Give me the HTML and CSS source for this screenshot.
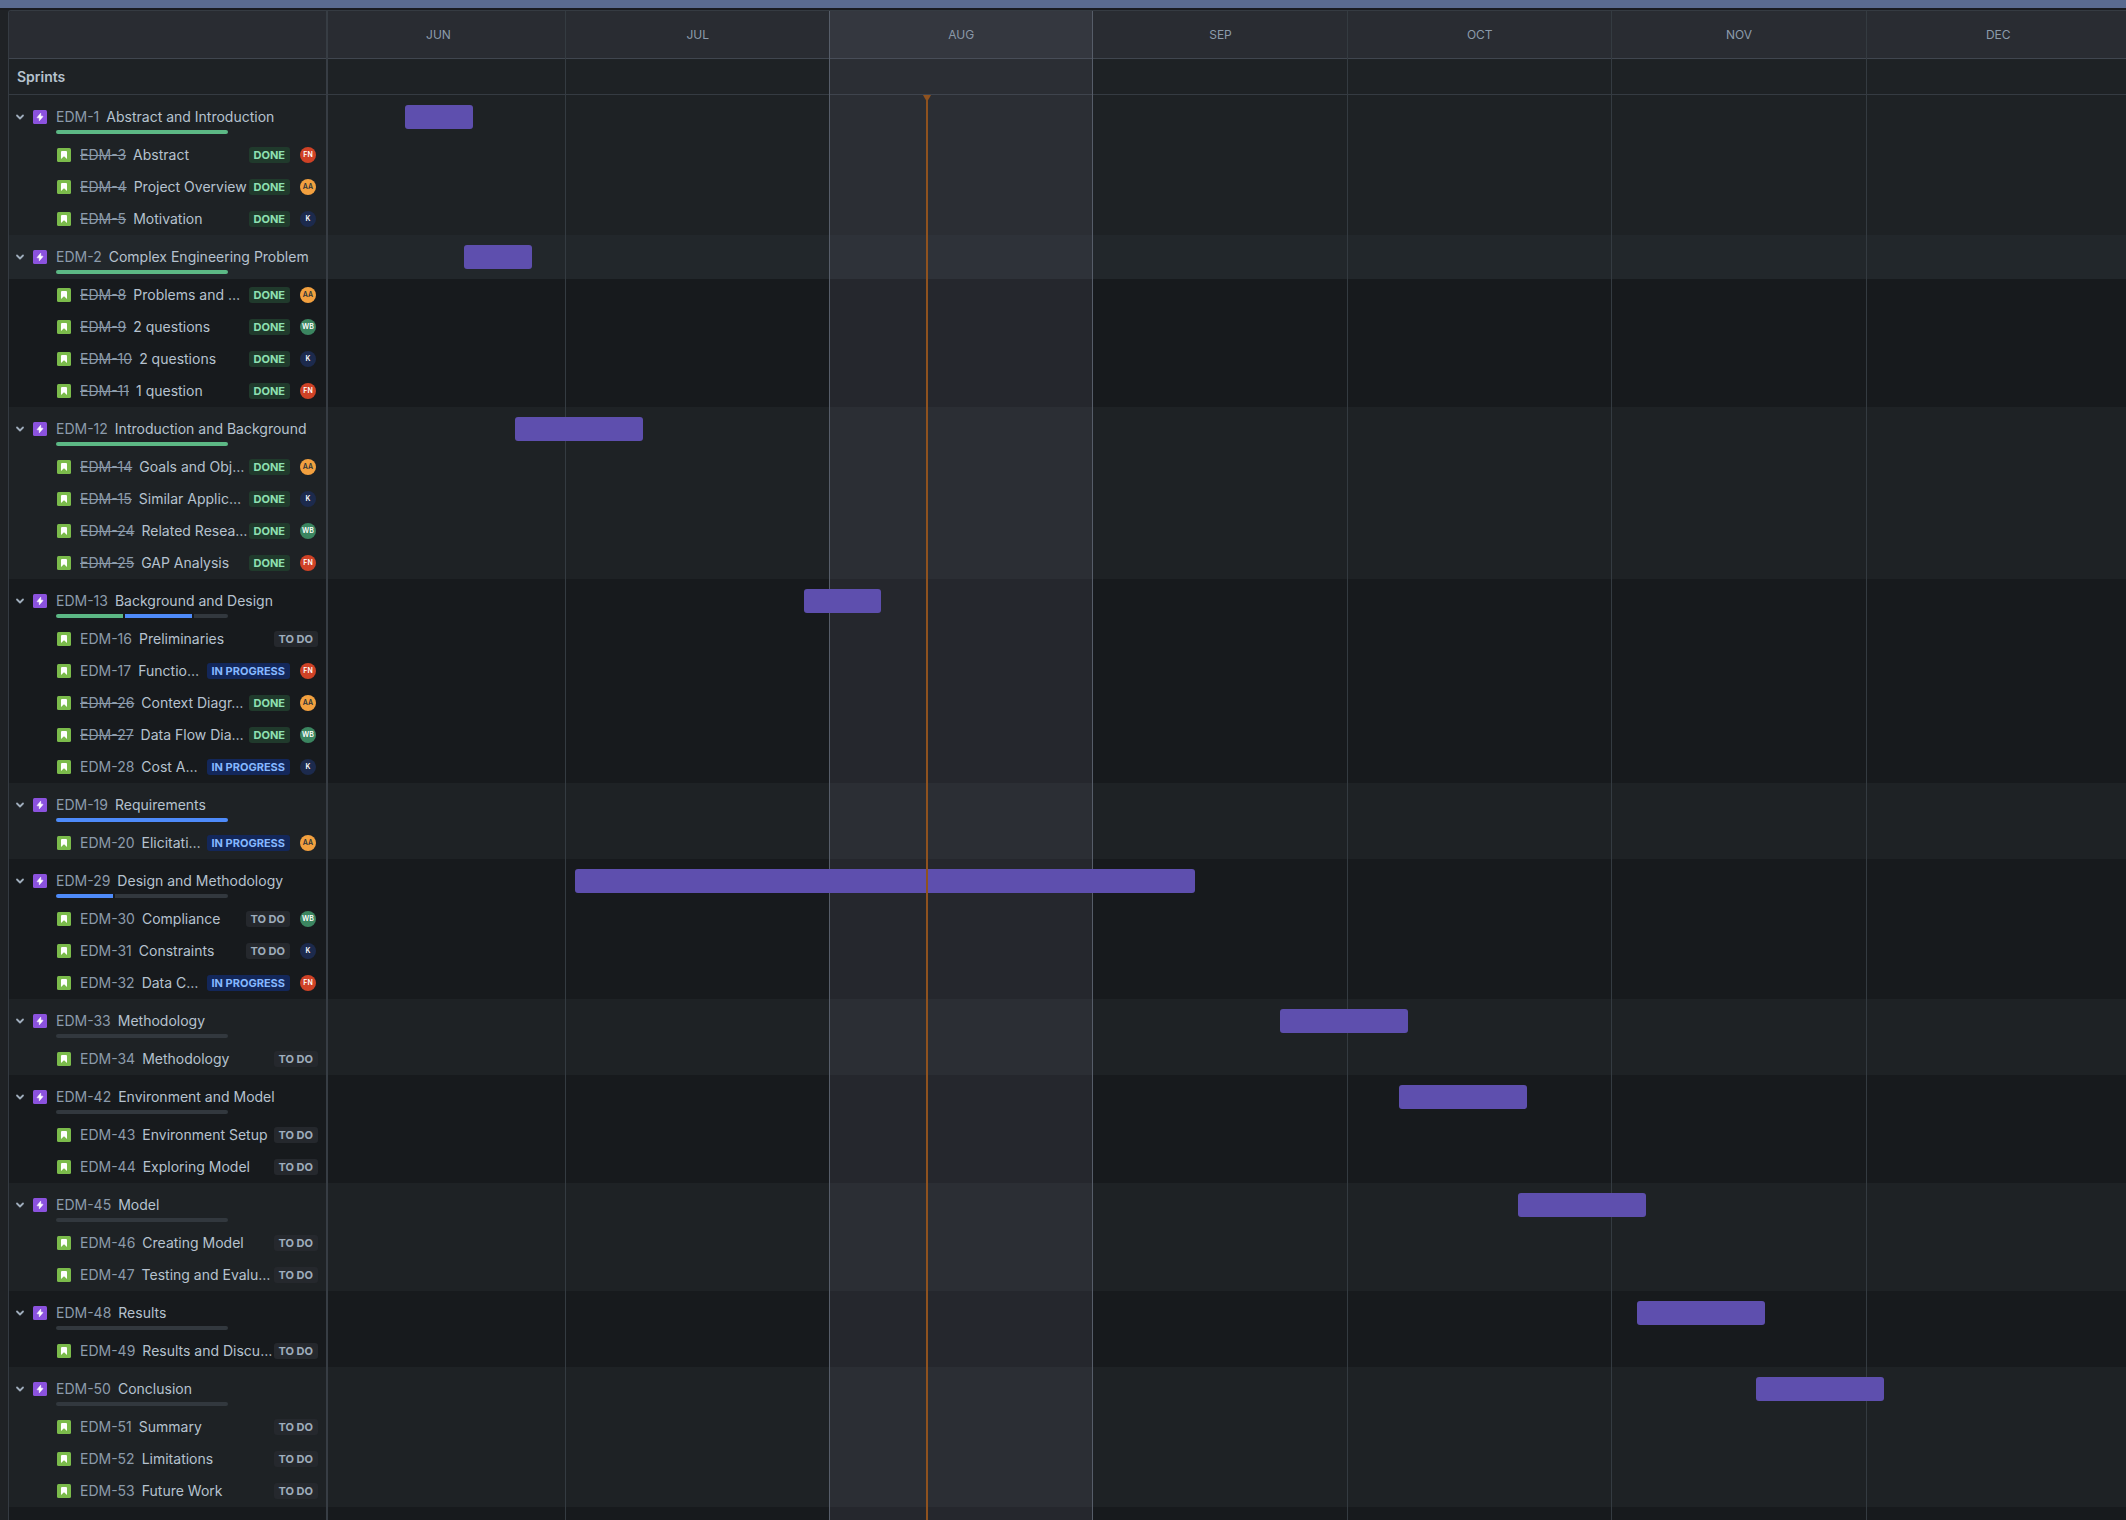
FILE: index.html
```html
<!DOCTYPE html>
<html lang="en">
<head>
<meta charset="utf-8">
<title>EDM roadmap</title>
<link rel="stylesheet" href="styles.css">
</head>
<body>
<svg class="sprite" aria-hidden="true">
  <symbol id="chevron" viewBox="0 0 16 16"><path d="M5 6.500 8 9.500 11 6.500" fill="none" stroke="currentColor" stroke-width="1.800" stroke-linecap="round" stroke-linejoin="round"/></symbol>
  <symbol id="bolt" viewBox="0 0 14 14"><rect width="14" height="14" rx="1.5" fill="#8b52de"/><path d="M7.700 3.200 4.200 7.400Q4 7.800 4.400 7.800H6.300V10.800L9.800 6.700Q10 6.200 9.600 6.200H7.700Z" fill="#fff" stroke="#fff" stroke-width="0.600" stroke-linejoin="round"/></symbol>
  <symbol id="story" viewBox="0 0 14 14"><rect width="14" height="14" rx="1.5" fill="#7bbb4b"/><path d="M5 3h4a1 1 0 0 1 1 1v7L7 8.200 4 11V4a1 1 0 0 1 1-1z" fill="#fff"/></symbol>
</svg>
<div class="topbar"></div>
<main class="roadmap">
  <header class="head">
    <div class="months days">
      <span class="m30">JUN</span><span class="m31">JUL</span><span class="m31">AUG</span><span class="m30">SEP</span><span class="m31">OCT</span><span class="m30">NOV</span><span class="m31">DEC</span>
    </div>
  </header>
  <div class="sprints">Sprints</div>

  <div class="body">
    <section class="group">
      <div class="epic">
        <div class="side"><button class="toggle" aria-label="Collapse EDM-1"><svg><use href="#chevron"/></svg></button><svg class="icon"><use href="#bolt"/></svg><div class="info"><div class="line"><a href="#" class="key">EDM-1</a><span class="title">Abstract and Introduction</span></div><div class="progress"><i class="done" style="flex-grow:3"></i></div></div></div>
        <div class="lane"><div class="days"><div class="bar" style="grid-column:12/span 8"></div></div></div>
      </div>
      <div class="issue"><svg class="icon"><use href="#story"/></svg><a href="#" class="key closed">EDM-3</a><span class="title">Abstract</span><span class="badge done">DONE</span><span class="avatar fn">FN</span></div>
      <div class="issue"><svg class="icon"><use href="#story"/></svg><a href="#" class="key closed">EDM-4</a><span class="title">Project Overview</span><span class="badge done">DONE</span><span class="avatar aa">AA</span></div>
      <div class="issue"><svg class="icon"><use href="#story"/></svg><a href="#" class="key closed">EDM-5</a><span class="title">Motivation</span><span class="badge done">DONE</span><span class="avatar k">K</span></div>
    </section>

    <section class="group">
      <div class="epic hovered">
        <div class="side"><button class="toggle" aria-label="Collapse EDM-2"><svg><use href="#chevron"/></svg></button><svg class="icon"><use href="#bolt"/></svg><div class="info"><div class="line"><a href="#" class="key">EDM-2</a><span class="title">Complex Engineering Problem</span></div><div class="progress"><i class="done" style="flex-grow:4"></i></div></div></div>
        <div class="lane"><div class="days"><div class="bar" style="grid-column:19/span 8"></div></div></div>
      </div>
      <div class="issue"><svg class="icon"><use href="#story"/></svg><a href="#" class="key closed">EDM-8</a><span class="title">Problems and …</span><span class="badge done">DONE</span><span class="avatar aa">AA</span></div>
      <div class="issue"><svg class="icon"><use href="#story"/></svg><a href="#" class="key closed">EDM-9</a><span class="title">2 questions</span><span class="badge done">DONE</span><span class="avatar wb">WB</span></div>
      <div class="issue"><svg class="icon"><use href="#story"/></svg><a href="#" class="key closed">EDM-10</a><span class="title">2 questions</span><span class="badge done">DONE</span><span class="avatar k">K</span></div>
      <div class="issue"><svg class="icon"><use href="#story"/></svg><a href="#" class="key closed">EDM-11</a><span class="title">1 question</span><span class="badge done">DONE</span><span class="avatar fn">FN</span></div>
    </section>

    <section class="group">
      <div class="epic">
        <div class="side"><button class="toggle" aria-label="Collapse EDM-12"><svg><use href="#chevron"/></svg></button><svg class="icon"><use href="#bolt"/></svg><div class="info"><div class="line"><a href="#" class="key">EDM-12</a><span class="title">Introduction and Background</span></div><div class="progress"><i class="done" style="flex-grow:4"></i></div></div></div>
        <div class="lane"><div class="days"><div class="bar" style="grid-column:25/span 15"></div></div></div>
      </div>
      <div class="issue"><svg class="icon"><use href="#story"/></svg><a href="#" class="key closed">EDM-14</a><span class="title">Goals and Obj…</span><span class="badge done">DONE</span><span class="avatar aa">AA</span></div>
      <div class="issue"><svg class="icon"><use href="#story"/></svg><a href="#" class="key closed">EDM-15</a><span class="title">Similar Applic…</span><span class="badge done">DONE</span><span class="avatar k">K</span></div>
      <div class="issue"><svg class="icon"><use href="#story"/></svg><a href="#" class="key closed">EDM-24</a><span class="title">Related Resea…</span><span class="badge done">DONE</span><span class="avatar wb">WB</span></div>
      <div class="issue"><svg class="icon"><use href="#story"/></svg><a href="#" class="key closed">EDM-25</a><span class="title">GAP Analysis</span><span class="badge done">DONE</span><span class="avatar fn">FN</span></div>
    </section>

    <section class="group">
      <div class="epic">
        <div class="side"><button class="toggle" aria-label="Collapse EDM-13"><svg><use href="#chevron"/></svg></button><svg class="icon"><use href="#bolt"/></svg><div class="info"><div class="line"><a href="#" class="key">EDM-13</a><span class="title">Background and Design</span></div><div class="progress"><i class="done" style="flex-grow:2"></i><i class="doing" style="flex-grow:2"></i><i style="flex-grow:1"></i></div></div></div>
        <div class="lane"><div class="days"><div class="bar" style="grid-column:59/span 9"></div></div></div>
      </div>
      <div class="issue"><svg class="icon"><use href="#story"/></svg><a href="#" class="key">EDM-16</a><span class="title">Preliminaries</span><span class="badge">TO DO</span></div>
      <div class="issue"><svg class="icon"><use href="#story"/></svg><a href="#" class="key">EDM-17</a><span class="title">Functio…</span><span class="badge doing">IN PROGRESS</span><span class="avatar fn">FN</span></div>
      <div class="issue"><svg class="icon"><use href="#story"/></svg><a href="#" class="key closed">EDM-26</a><span class="title">Context Diagr…</span><span class="badge done">DONE</span><span class="avatar aa">AA</span></div>
      <div class="issue"><svg class="icon"><use href="#story"/></svg><a href="#" class="key closed">EDM-27</a><span class="title">Data Flow Dia…</span><span class="badge done">DONE</span><span class="avatar wb">WB</span></div>
      <div class="issue"><svg class="icon"><use href="#story"/></svg><a href="#" class="key">EDM-28</a><span class="title">Cost A…</span><span class="badge doing">IN PROGRESS</span><span class="avatar k">K</span></div>
    </section>

    <section class="group">
      <div class="epic">
        <div class="side"><button class="toggle" aria-label="Collapse EDM-19"><svg><use href="#chevron"/></svg></button><svg class="icon"><use href="#bolt"/></svg><div class="info"><div class="line"><a href="#" class="key">EDM-19</a><span class="title">Requirements</span></div><div class="progress"><i class="doing" style="flex-grow:1"></i></div></div></div>
        <div class="lane"></div>
      </div>
      <div class="issue"><svg class="icon"><use href="#story"/></svg><a href="#" class="key">EDM-20</a><span class="title">Elicitati…</span><span class="badge doing">IN PROGRESS</span><span class="avatar aa">AA</span></div>
    </section>

    <section class="group">
      <div class="epic">
        <div class="side"><button class="toggle" aria-label="Collapse EDM-29"><svg><use href="#chevron"/></svg></button><svg class="icon"><use href="#bolt"/></svg><div class="info"><div class="line"><a href="#" class="key">EDM-29</a><span class="title">Design and Methodology</span></div><div class="progress"><i class="doing" style="flex-grow:1"></i><i style="flex-grow:2"></i></div></div></div>
        <div class="lane"><div class="days"><div class="bar" style="grid-column:32/span 73"></div></div></div>
      </div>
      <div class="issue"><svg class="icon"><use href="#story"/></svg><a href="#" class="key">EDM-30</a><span class="title">Compliance</span><span class="badge">TO DO</span><span class="avatar wb">WB</span></div>
      <div class="issue"><svg class="icon"><use href="#story"/></svg><a href="#" class="key">EDM-31</a><span class="title">Constraints</span><span class="badge">TO DO</span><span class="avatar k">K</span></div>
      <div class="issue"><svg class="icon"><use href="#story"/></svg><a href="#" class="key">EDM-32</a><span class="title">Data C…</span><span class="badge doing">IN PROGRESS</span><span class="avatar fn">FN</span></div>
    </section>

    <section class="group">
      <div class="epic">
        <div class="side"><button class="toggle" aria-label="Collapse EDM-33"><svg><use href="#chevron"/></svg></button><svg class="icon"><use href="#bolt"/></svg><div class="info"><div class="line"><a href="#" class="key">EDM-33</a><span class="title">Methodology</span></div><div class="progress"><i style="flex-grow:1"></i></div></div></div>
        <div class="lane"><div class="days"><div class="bar" style="grid-column:115/span 15"></div></div></div>
      </div>
      <div class="issue"><svg class="icon"><use href="#story"/></svg><a href="#" class="key">EDM-34</a><span class="title">Methodology</span><span class="badge">TO DO</span></div>
    </section>

    <section class="group">
      <div class="epic">
        <div class="side"><button class="toggle" aria-label="Collapse EDM-42"><svg><use href="#chevron"/></svg></button><svg class="icon"><use href="#bolt"/></svg><div class="info"><div class="line"><a href="#" class="key">EDM-42</a><span class="title">Environment and Model</span></div><div class="progress"><i style="flex-grow:1"></i></div></div></div>
        <div class="lane"><div class="days"><div class="bar" style="grid-column:129/span 15"></div></div></div>
      </div>
      <div class="issue"><svg class="icon"><use href="#story"/></svg><a href="#" class="key">EDM-43</a><span class="title">Environment Setup</span><span class="badge">TO DO</span></div>
      <div class="issue"><svg class="icon"><use href="#story"/></svg><a href="#" class="key">EDM-44</a><span class="title">Exploring Model</span><span class="badge">TO DO</span></div>
    </section>

    <section class="group">
      <div class="epic">
        <div class="side"><button class="toggle" aria-label="Collapse EDM-45"><svg><use href="#chevron"/></svg></button><svg class="icon"><use href="#bolt"/></svg><div class="info"><div class="line"><a href="#" class="key">EDM-45</a><span class="title">Model</span></div><div class="progress"><i style="flex-grow:1"></i></div></div></div>
        <div class="lane"><div class="days"><div class="bar" style="grid-column:143/span 15"></div></div></div>
      </div>
      <div class="issue"><svg class="icon"><use href="#story"/></svg><a href="#" class="key">EDM-46</a><span class="title">Creating Model</span><span class="badge">TO DO</span></div>
      <div class="issue"><svg class="icon"><use href="#story"/></svg><a href="#" class="key">EDM-47</a><span class="title">Testing and Evalu…</span><span class="badge">TO DO</span></div>
    </section>

    <section class="group">
      <div class="epic">
        <div class="side"><button class="toggle" aria-label="Collapse EDM-48"><svg><use href="#chevron"/></svg></button><svg class="icon"><use href="#bolt"/></svg><div class="info"><div class="line"><a href="#" class="key">EDM-48</a><span class="title">Results</span></div><div class="progress"><i style="flex-grow:1"></i></div></div></div>
        <div class="lane"><div class="days"><div class="bar" style="grid-column:157/span 15"></div></div></div>
      </div>
      <div class="issue"><svg class="icon"><use href="#story"/></svg><a href="#" class="key">EDM-49</a><span class="title">Results and Discu…</span><span class="badge">TO DO</span></div>
    </section>

    <section class="group">
      <div class="epic">
        <div class="side"><button class="toggle" aria-label="Collapse EDM-50"><svg><use href="#chevron"/></svg></button><svg class="icon"><use href="#bolt"/></svg><div class="info"><div class="line"><a href="#" class="key">EDM-50</a><span class="title">Conclusion</span></div><div class="progress"><i style="flex-grow:1"></i></div></div></div>
        <div class="lane"><div class="days"><div class="bar" style="grid-column:171/span 15"></div></div></div>
      </div>
      <div class="issue"><svg class="icon"><use href="#story"/></svg><a href="#" class="key">EDM-51</a><span class="title">Summary</span><span class="badge">TO DO</span></div>
      <div class="issue"><svg class="icon"><use href="#story"/></svg><a href="#" class="key">EDM-52</a><span class="title">Limitations</span><span class="badge">TO DO</span></div>
      <div class="issue"><svg class="icon"><use href="#story"/></svg><a href="#" class="key">EDM-53</a><span class="title">Future Work</span><span class="badge">TO DO</span></div>
    </section>

    <div class="overlay marker"><div class="days"><div class="today" style="grid-column:73"></div></div></div>
  </div>

  <div class="overlay lines"><div class="days">
    <div class="m30"></div><div class="m31 before"></div><div class="m31 current"></div><div class="m30"></div><div class="m31"></div><div class="m30"></div><div class="m31"></div>
  </div></div>
</main>
</body>
</html>
```
FILE: styles.css
```css
* { box-sizing: border-box; }

:root {
  --side: 319px;
  --line: #353b42;
  --row: #1e2225;
  --row-alt: #171a1d;
}

body {
  margin: 0;
  min-height: 100vh;
  display: flex;
  flex-direction: column;
  background: #1f2225;
  color: #b6c2cf;
  font: 14px/20px Inter, "Liberation Sans", sans-serif;
}

.sprite { position: absolute; width: 0; height: 0; }

.topbar {
  height: 10px;
  background: #5a6b90;
  border-bottom: 2px solid #191b1f;
}

.roadmap {
  position: relative;
  flex: 1;
  display: flex;
  flex-direction: column;
  margin-left: 8px;
  border: 1px solid var(--line);
  border-width: 1px 0 0 1px;
  border-top-left-radius: 3px;
  overflow: hidden;
}

/* One column per day, June to December; the edges run past the visible area. */
.days {
  display: grid;
  grid-template-columns: repeat(214, minmax(0, 1fr));
  margin: 0 -4px 0 -17px;
}
.m30 { grid-column: span 30; }
.m31 { grid-column: span 31; }

.head {
  padding-left: var(--side);
  background: #292c32;
  border-bottom: 1px solid #40464f;
}
.months {
  padding: 14px 0 13px;
  color: #8c9bab;
  font-size: 12px;
  text-align: center;
}

.sprints {
  padding: 8px 8px 7px;
  background: var(--row);
  border-bottom: 1px solid var(--line);
  font-weight: 600;
}

.body { position: relative; flex: 1; background: var(--row-alt); }
.group { background: var(--row); }
.group:nth-of-type(even) { background: var(--row-alt); }

.epic { display: grid; grid-template-columns: var(--side) minmax(0, 1fr); height: 44px; }
.hovered { background: #22272b; }
.side { display: flex; padding: 12px 8px 0 3px; }
.toggle {
  width: 16px;
  height: 20px;
  margin-right: 5px;
  padding: 2px 0;
  border: 0;
  background: none;
  color: #9fadbc;
}
.toggle svg { display: block; width: 16px; height: 16px; }
.icon { flex: none; width: 14px; height: 14px; margin-right: 9px; }
.side .icon { margin-top: 3px; }
.info { flex: 1; min-width: 0; }
.line { display: flex; gap: 7px; }

.key { flex: none; color: #8c9bab; text-decoration: none; }
.closed { text-decoration: line-through; }
.title { white-space: nowrap; }

.progress { display: flex; gap: 2px; width: 172px; height: 4px; margin-top: 3px; border-radius: 2px; overflow: hidden; }
.progress i { flex-basis: 0; background: #32383e; }
.progress .done { background: #5cb885; }
.progress .doing { background: #4e8bfa; }

.issue { display: flex; align-items: center; width: var(--side); height: 32px; padding: 0 10px 0 48px; }
.issue .title { flex: 1; min-width: 0; margin-left: 7px; }

.badge {
  flex: none;
  padding: 0 5px;
  border-radius: 3px;
  background: #25282d;
  color: #9fadbc;
  font-size: 11px;
  font-weight: 700;
  line-height: 16px;
}
.badge.done { background: #203a2c; color: #8ee0b2; }
.badge.doing { background: #13275a; color: #85b8ff; }

.avatar {
  flex: none;
  width: 16px;
  height: 16px;
  margin: 0 2px 0 10px;
  border-radius: 50%;
  font-size: 7px;
  font-weight: 600;
  line-height: 16px;
  text-align: center;
  color: #fff;
}
.fn { background: #cf4226; }
.aa { background: #f2a03f; color: #2c333a; }
.wb { background: #3b8560; }
.k { background: #1c2a4d; }

.lane { overflow: hidden; position: relative; z-index: 2; }
.bar { height: 24px; margin-top: 10px; border-radius: 3px; background: #5e4fae; }

.overlay { position: absolute; top: 0; right: 0; bottom: 0; overflow: hidden; pointer-events: none; }
.overlay .days { height: 100%; }
.lines { z-index: 1; left: calc(var(--side) - 2px); border-left: 2px solid #373d44; }
.lines .days > * { border-right: 1px solid #343b41; }
.lines .days > .before { border-color: #565d69; }
.lines .days > .current { border-color: #565d69; background: rgba(130, 135, 155, 0.13); }

.marker { z-index: 3; left: var(--side); }
.today { position: relative; justify-self: center; width: 2px; background: #8f521f; }
.today::before {
  content: "";
  position: absolute;
  top: 0;
  left: -3px;
  border: 4px solid transparent;
  border-top: 7px solid #8f521f;
  border-bottom: 0;
}
```
